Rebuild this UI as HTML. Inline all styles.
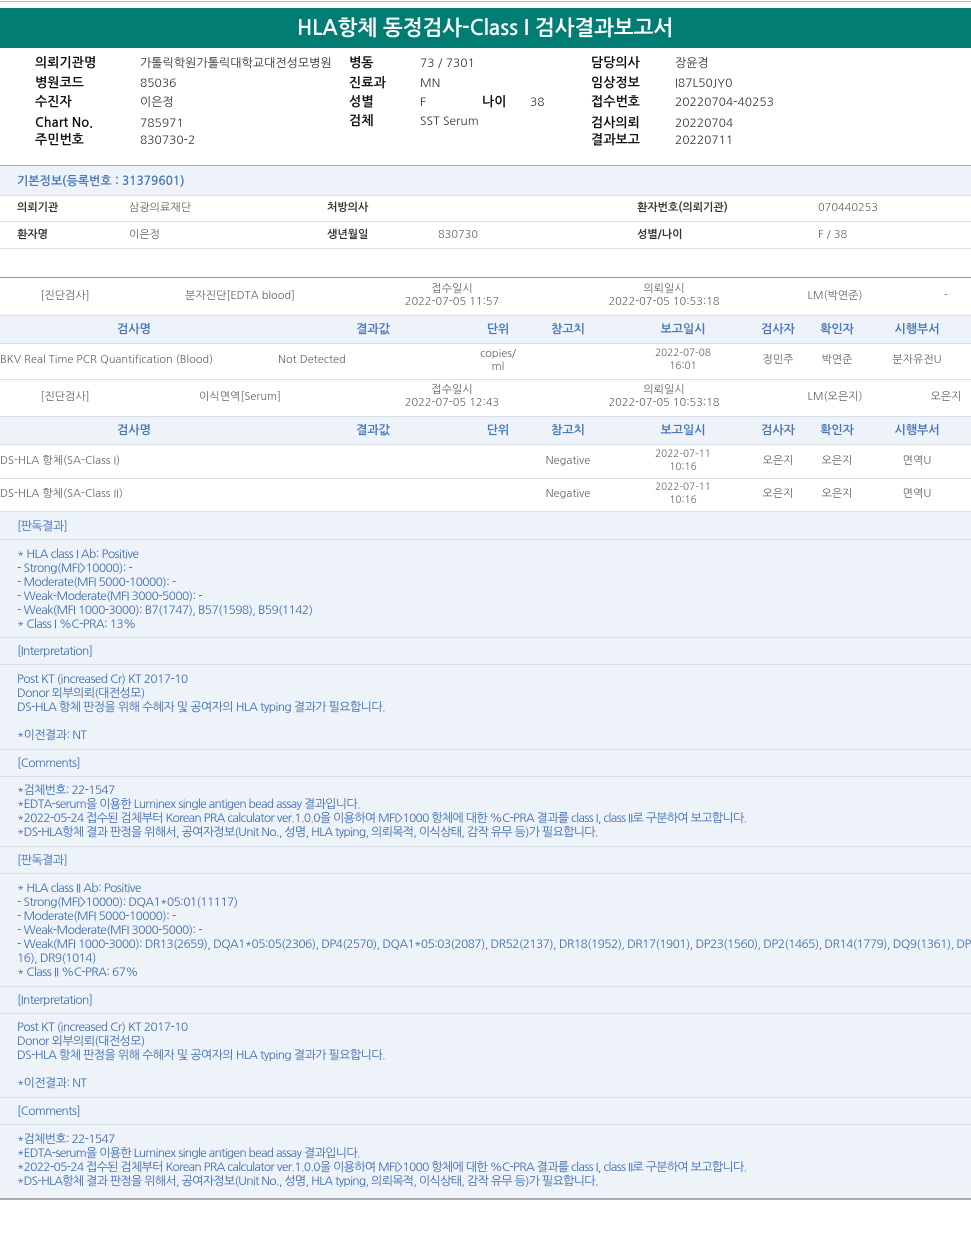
<!DOCTYPE html>
<html><head><meta charset="utf-8">
<style>
*{margin:0;padding:0;box-sizing:border-box}
body{width:971px;height:1236px;position:relative;background:#fff;font-family:"Liberation Sans","NanumGothic","Noto Sans CJK KR",sans-serif;overflow:hidden}
.a{position:absolute;white-space:nowrap;line-height:14px;font-size:12px}
.c{transform:translateX(-50%);text-align:center}
.k{font-weight:bold;font-size:13px;color:#111;font-family:"NanumGothic","Noto Sans CJK KR",sans-serif}
.v{font-size:12px;color:#333;font-family:"NanumGothic","Noto Sans CJK KR",sans-serif}
.g{color:#666;font-size:11px;font-family:"NanumGothic","Noto Sans CJK KR",sans-serif}
.gb{color:#333;font-size:11px;font-weight:bold;font-family:"NanumGothic","Noto Sans CJK KR",sans-serif}
.h{color:#4a78b8;font-weight:bold;font-size:12px;font-family:"NanumGothic","Noto Sans CJK KR",sans-serif}
.b{color:#3c6cb2;font-size:12px;font-family:"NanumGothic","Noto Sans CJK KR",sans-serif;letter-spacing:-0.6px}
.n{letter-spacing:-0.7px}
.ln{position:absolute;left:0;width:971px;height:1px;background:#d8e0ea}
.bg{position:absolute;left:0;width:971px;background:#eef3f9}
.clip{position:absolute;left:0;width:971px;overflow:hidden}
</style></head><body>
<div class="ln" style="top:1px;background:#bbb"></div>
<div style="position:absolute;left:0;top:8px;width:971px;height:40px;background:#027d73"></div>
<div class="a c" style="left:485px;top:17px;line-height:24px;font-size:21px;font-weight:bold;color:#fff;font-family:'NanumGothic','Noto Sans CJK KR',sans-serif">HLA항체 동정검사-Class I 검사결과보고서</div>

<div class="a k" style="left:35px;top:56px">의뢰기관명</div><div class="a v" style="left:140px;top:56px">가톨릭학원가톨릭대학교대전성모병원</div>
<div class="a k" style="left:35px;top:76px">병원코드</div><div class="a v" style="left:140px;top:76px">85036</div>
<div class="a k" style="left:35px;top:95px">수진자</div><div class="a v" style="left:140px;top:95px">이은정</div>
<div class="a k" style="left:35px;top:116px">Chart No.</div><div class="a v" style="left:140px;top:116px">785971</div>
<div class="a k" style="left:35px;top:133px">주민번호</div><div class="a v" style="left:140px;top:133px">830730-2</div>
<div class="a k" style="left:349px;top:56px">병동</div><div class="a v" style="left:420px;top:56px">73 / 7301</div>
<div class="a k" style="left:349px;top:76px">진료과</div><div class="a v" style="left:420px;top:76px">MN</div>
<div class="a k" style="left:349px;top:95px">성별</div><div class="a v" style="left:420px;top:95px">F</div>
<div class="a k" style="left:482px;top:95px">나이</div><div class="a v" style="left:530px;top:95px">38</div>
<div class="a k" style="left:349px;top:114px">검체</div><div class="a v" style="left:420px;top:114px">SST Serum</div>
<div class="a k" style="left:591px;top:56px">담당의사</div><div class="a v" style="left:675px;top:56px">장윤경</div>
<div class="a k" style="left:591px;top:76px">임상정보</div><div class="a v" style="left:675px;top:76px">I87L50JY0</div>
<div class="a k" style="left:591px;top:95px">접수번호</div><div class="a v" style="left:675px;top:95px">20220704-40253</div>
<div class="a k" style="left:591px;top:116px">검사의뢰</div><div class="a v" style="left:675px;top:116px">20220704</div>
<div class="a k" style="left:591px;top:133px">결과보고</div><div class="a v" style="left:675px;top:133px">20220711</div>

<div class="ln" style="top:165px;background:#aaa"></div>
<div class="bg" style="top:166px;height:29px"></div>
<div class="a h" style="left:17px;top:174px">기본정보(등록번호 : 31379601)</div>
<div class="ln" style="top:195px"></div>
<div class="a gb" style="left:17px;top:201px">의뢰기관</div><div class="a g" style="left:129px;top:201px">삼광의료재단</div>
<div class="a gb" style="left:327px;top:201px">처방의사</div>
<div class="a gb" style="left:637px;top:201px">환자번호(의뢰기관)</div><div class="a g" style="left:818px;top:201px">070440253</div>
<div class="ln" style="top:221px"></div>
<div class="a gb" style="left:17px;top:228px">환자명</div><div class="a g" style="left:129px;top:228px">이은정</div>
<div class="a gb" style="left:327px;top:228px">생년월일</div><div class="a g" style="left:438px;top:228px">830730</div>
<div class="a gb" style="left:637px;top:228px">성별/나이</div><div class="a g" style="left:818px;top:228px">F / 38</div>
<div class="ln" style="top:248px"></div>

<div class="ln" style="top:277px;background:#7d9bbd"></div>
<div class="a g c" style="left:65px;top:289px">[진단검사]</div>
<div class="a g c" style="left:240px;top:289px">분자진단[EDTA blood]</div>
<div class="a g c" style="left:452px;top:282px;line-height:13px">접수일시<br>2022-07-05 11:57</div>
<div class="a g c" style="left:664px;top:282px;line-height:13px">의뢰일시<br>2022-07-05 10:53:18</div>
<div class="a g c" style="left:835px;top:289px">LM(박연준)</div>
<div class="a g c" style="left:946px;top:289px">-</div>
<div class="ln" style="top:315px"></div>
<div class="bg" style="top:316px;height:27px"></div>
<div class="a h c" style="left:134px;top:322px">검사명</div><div class="a h c" style="left:373px;top:322px">결과값</div><div class="a h c" style="left:498px;top:322px">단위</div><div class="a h c" style="left:568px;top:322px">참고치</div><div class="a h c" style="left:683px;top:322px">보고일시</div><div class="a h c" style="left:778px;top:322px">검사자</div><div class="a h c" style="left:837px;top:322px">확인자</div><div class="a h c" style="left:917px;top:322px">시행부서</div>
<div class="ln" style="top:343px"></div>
<div class="a g" style="left:0;top:353px">BKV Real Time PCR Quantification (Blood)</div>
<div class="a g" style="left:278px;top:353px">Not Detected</div>
<div class="a g c" style="left:498px;top:347px;line-height:13px">copies/<br>ml</div>
<div class="a g c" style="left:683px;top:347px;line-height:13px;font-size:10px">2022-07-08<br>16:01</div>
<div class="a g c" style="left:778px;top:353px">정민주</div><div class="a g c" style="left:837px;top:353px">박연준</div><div class="a g c" style="left:917px;top:353px">분자유전U</div>
<div class="ln" style="top:379px"></div>
<div class="a g c" style="left:65px;top:390px">[진단검사]</div>
<div class="a g c" style="left:240px;top:390px">이식면역[Serum]</div>
<div class="a g c" style="left:452px;top:383px;line-height:13px">접수일시<br>2022-07-05 12:43</div>
<div class="a g c" style="left:664px;top:383px;line-height:13px">의뢰일시<br>2022-07-05 10:53:18</div>
<div class="a g c" style="left:835px;top:390px">LM(오은지)</div>
<div class="a g c" style="left:946px;top:390px">오은지</div>
<div class="ln" style="top:416px"></div>
<div class="bg" style="top:417px;height:27px"></div>
<div class="a h c" style="left:134px;top:423px">검사명</div><div class="a h c" style="left:373px;top:423px">결과값</div><div class="a h c" style="left:498px;top:423px">단위</div><div class="a h c" style="left:568px;top:423px">참고치</div><div class="a h c" style="left:683px;top:423px">보고일시</div><div class="a h c" style="left:778px;top:423px">검사자</div><div class="a h c" style="left:837px;top:423px">확인자</div><div class="a h c" style="left:917px;top:423px">시행부서</div>
<div class="ln" style="top:444px"></div>
<div class="a g" style="left:0;top:454px">DS-HLA 항체(SA-Class I)</div>
<div class="a g c" style="left:568px;top:454px">Negative</div>
<div class="a g c" style="left:683px;top:448px;line-height:13px;font-size:10px">2022-07-11<br>10:16</div>
<div class="a g c" style="left:778px;top:454px">오은지</div><div class="a g c" style="left:837px;top:454px">오은지</div><div class="a g c" style="left:917px;top:454px">면역U</div>
<div class="ln" style="top:478px"></div>
<div class="a g" style="left:0;top:487px">DS-HLA 항체(SA-Class II)</div>
<div class="a g c" style="left:568px;top:487px">Negative</div>
<div class="a g c" style="left:683px;top:481px;line-height:13px;font-size:10px">2022-07-11<br>10:16</div>
<div class="a g c" style="left:778px;top:487px">오은지</div><div class="a g c" style="left:837px;top:487px">오은지</div><div class="a g c" style="left:917px;top:487px">면역U</div>
<div class="ln" style="top:511px"></div>

<div class="bg" style="top:512px;height:686px"></div>
<div class="a b" style="left:17px;top:519px">[판독결과]</div>
<div class="ln" style="top:539px"></div>
<div class="a b" style="left:17px;top:547px">* HLA class I Ab: Positive<br>- Strong(MFI&gt;10000): -<br>- Moderate(MFI 5000-10000): -<br>- Weak-Moderate(MFI 3000-5000): -<br>- Weak(MFI 1000-3000): B7(1747), B57(1598), B59(1142)<br>* Class I %C-PRA: 13%</div>
<div class="ln" style="top:637px"></div>
<div class="a b" style="left:17px;top:644px">[Interpretation]</div>
<div class="ln" style="top:664px"></div>
<div class="a b" style="left:17px;top:672px">Post KT (increased Cr) KT 2017-10<br>Donor 외부의뢰(대전성모)<br>DS-HLA 항체 판정을 위해 수혜자 및 공여자의 HLA typing 결과가 필요합니다.<br><br>*이전결과: NT</div>
<div class="ln" style="top:749px"></div>
<div class="a b" style="left:17px;top:756px">[Comments]</div>
<div class="ln" style="top:776px"></div>
<div class="a b n" style="left:17px;top:783px">*검체번호: 22-1547<br>*EDTA-serum을 이용한 Luminex single antigen bead assay 결과입니다.<br>*2022-05-24 접수된 검체부터 Korean PRA calculator ver.1.0.0을 이용하여 MFI&gt;1000 항체에 대한 %C-PRA 결과를 class I, class II로 구분하여 보고합니다.<br>*DS-HLA항체 결과 판정을 위해서, 공여자정보(Unit No., 성명, HLA typing, 의뢰목적, 이식상태, 감작 유무 등)가 필요합니다.</div>
<div class="ln" style="top:846px"></div>
<div class="a b" style="left:17px;top:853px">[판독결과]</div>
<div class="ln" style="top:873px"></div>
<div class="clip" style="top:881px;height:100px"><div class="a b" style="left:17px;top:0">* HLA class II Ab: Positive<br>- Strong(MFI&gt;10000): DQA1*05:01(11117)<br>- Moderate(MFI 5000-10000): -<br>- Weak-Moderate(MFI 3000-5000): -<br>- Weak(MFI 1000-3000): DR13(2659), DQA1*05:05(2306), DP4(2570), DQA1*05:03(2087), DR52(2137), DR18(1952), DR17(1901), DP23(1560), DP2(1465), DR14(1779), DQ9(1361), DP2<br>16), DR9(1014)<br>* Class II %C-PRA: 67%</div></div>
<div class="ln" style="top:986px"></div>
<div class="a b" style="left:17px;top:993px">[Interpretation]</div>
<div class="ln" style="top:1013px"></div>
<div class="a b" style="left:17px;top:1020px">Post KT (increased Cr) KT 2017-10<br>Donor 외부의뢰(대전성모)<br>DS-HLA 항체 판정을 위해 수혜자 및 공여자의 HLA typing 결과가 필요합니다.<br><br>*이전결과: NT</div>
<div class="ln" style="top:1097px"></div>
<div class="a b" style="left:17px;top:1104px">[Comments]</div>
<div class="ln" style="top:1124px"></div>
<div class="a b n" style="left:17px;top:1132px">*검체번호: 22-1547<br>*EDTA-serum을 이용한 Luminex single antigen bead assay 결과입니다.<br>*2022-05-24 접수된 검체부터 Korean PRA calculator ver.1.0.0을 이용하여 MFI&gt;1000 항체에 대한 %C-PRA 결과를 class I, class II로 구분하여 보고합니다.<br>*DS-HLA항체 결과 판정을 위해서, 공여자정보(Unit No., 성명, HLA typing, 의뢰목적, 이식상태, 감작 유무 등)가 필요합니다.</div>
<div class="ln" style="top:1198px;height:2px;background:#aaa"></div>
</body></html>
